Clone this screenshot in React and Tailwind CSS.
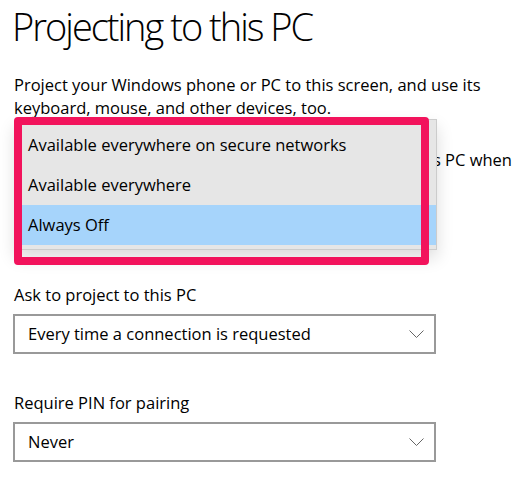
import React from "react";

function Chevron() {
  return (
    <svg width="15" height="8" viewBox="0 0 15 8" fill="none" className="shrink-0">
      <path d="M0.5 0.5 L7.5 7.5 L14.5 0.5" stroke="#666" strokeWidth="1" />
    </svg>
  );
}

function Select({ value }) {
  return (
    <div className="mt-[8px] ml-[13px] w-[423px] h-[40px] border-2 border-[#999999] bg-white flex items-center justify-between pl-[13px] pr-[10px]">
      <span className="text-[16.5px] text-black">{value}</span>
      <Chevron />
    </div>
  );
}

export default function App() {
  const items = [
    { label: "Available everywhere on secure networks", active: false },
    { label: "Available everywhere", active: false },
    { label: "Always Off", active: true },
  ];

  return (
    <div className="relative w-[525px] h-[487px] overflow-hidden bg-white text-black font-['Open_Sans',sans-serif]">
      <h1 className="pl-[12px] pt-[1px] text-[38px] leading-[51px] font-light tracking-[-2px]">
        Projecting to this PC
      </h1>

      <p className="mt-[21px] pl-[14px] pr-[30px] text-[16.5px] leading-[23px]">
        Project your Windows phone or PC to this screen, and use its keyboard, mouse, and other devices, too.
      </p>

      {/* underlying row, mostly covered by the open dropdown */}
      <div className="mt-[29px] w-[512px] flex justify-end text-[16.5px] leading-[23px] whitespace-nowrap">
        <span>this PC when</span>
      </div>

      <p className="mt-[112px] pl-[14px] text-[16.5px] leading-[23px]">Ask to project to this PC</p>
      <Select value="Every time a connection is requested" />

      <p className="mt-[37px] pl-[14px] text-[16.5px] leading-[23px]">Require PIN for pairing</p>
      <Select value="Never" />

      {/* open dropdown */}
      <div className="absolute left-[15px] top-[119px] w-[422px] h-[131px] bg-[#e6e6e6] border border-[#cccccc] shadow-[0_8px_16px_rgba(0,0,0,0.14)] pt-[5px]">
        {items.map((it) => (
          <div
            key={it.label}
            className={`h-[40px] flex items-center pl-[12px] text-[16.5px] ${it.active ? "bg-[#a6d4fb]" : ""}`}
          >
            {it.label}
          </div>
        ))}
      </div>

      {/* highlight frame */}
      <div className="absolute left-[14px] top-[117px] w-[415px] h-[148px] border-[8px] border-[#f2135c] rounded-[4px]" />
    </div>
  );
}
